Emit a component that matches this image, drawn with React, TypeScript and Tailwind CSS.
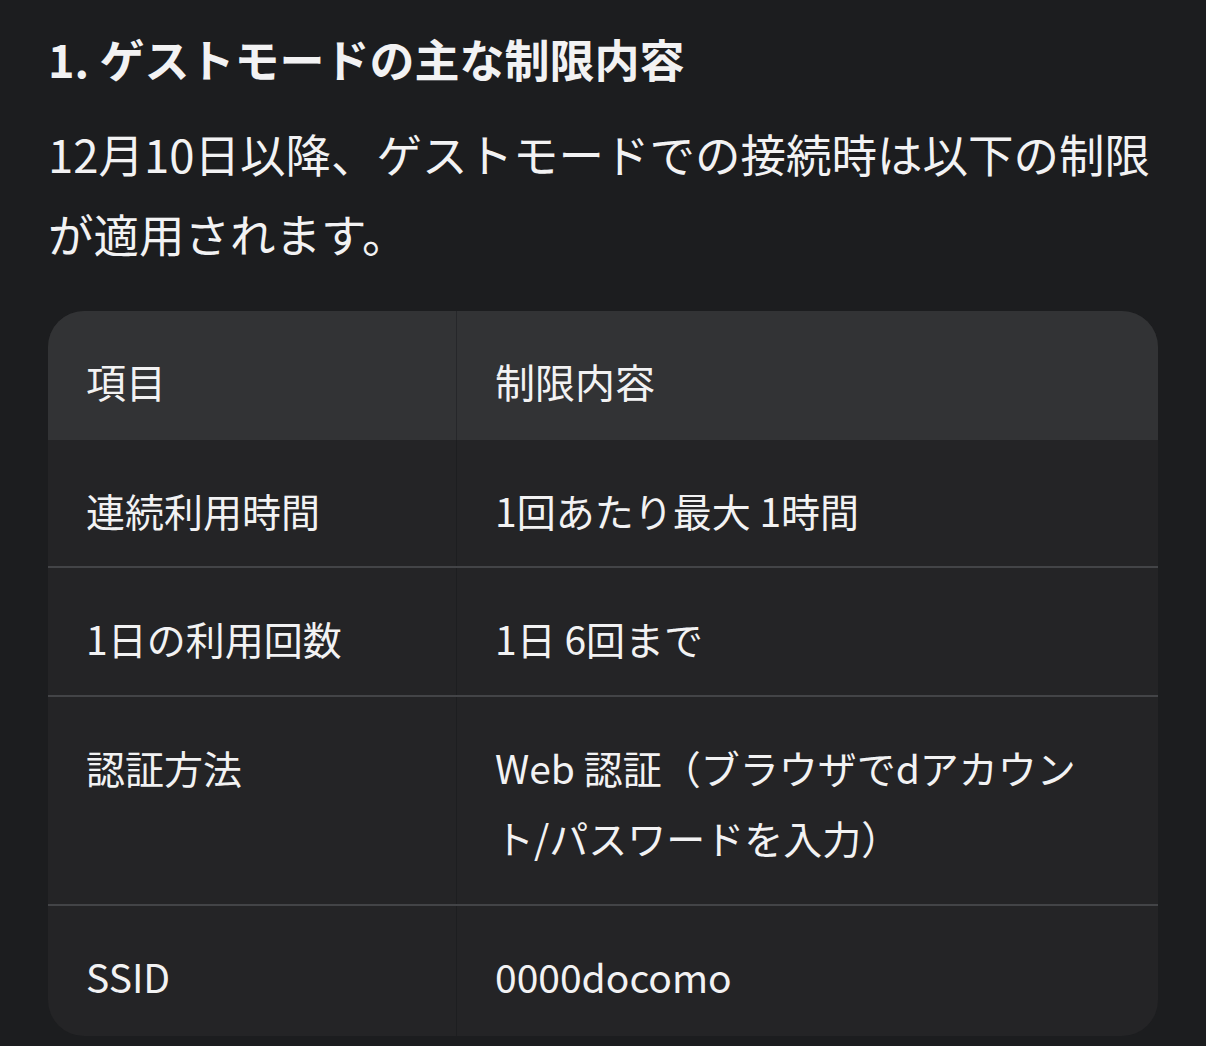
const rows: { label: string; value: string; h: string }[] = [
  { label: "連続利用時間", value: "1回あたり最大 1時間", h: "h-[128px]" },
  { label: "1日の利用回数", value: "1日 6回まで", h: "h-[129px]" },
  { label: "認証方法", value: "Web 認証（ブラウザでdアカウント/パスワードを入力）", h: "h-[209px]" },
  { label: "SSID", value: "0000docomo", h: "h-[130px]" },
]

export default function App() {
  return (
    <div
      className="min-h-[1046px] w-[1206px] bg-[#1c1d1f] text-[#f2f2f3] px-[48px] overflow-hidden"
      style={{ fontFamily: '"Noto Sans CJK JP", "Noto Sans", sans-serif' }}
    >
      <h2 className="pt-[29px] text-[45px] font-bold leading-[60px]">1. ゲストモードの主な制限内容</h2>
      <p className="mt-[24px] text-[45.5px] leading-[80px]">
        12月10日以降、ゲストモードでの接続時は以下の制限が適用されます。
      </p>
      <div className="mt-[38px] w-[1110px] rounded-[36px] overflow-hidden bg-[#242426] text-[39px]">
        <div className="flex h-[129px] bg-[#323335] leading-[70px]">
          <div className="w-[409px] pt-[35px] px-[38px] border-r border-[#26272a] text-[40px]">項目</div>
          <div className="flex-1 pt-[35px] px-[38px] text-[40px]">制限内容</div>
        </div>
        {rows.map((r, i) => (
          <div
            key={r.label}
            className={`flex ${r.h} leading-[70px] ${i < rows.length - 1 ? "border-b-2 border-[#434447]" : ""}`}
          >
            <div className="w-[409px] pt-[35px] px-[38px] border-r border-[#1d1e20]">{r.label}</div>
            <div className="flex-1 pt-[35px] pl-[38px] pr-[60px]">{r.value}</div>
          </div>
        ))}
      </div>
    </div>
  )
}
